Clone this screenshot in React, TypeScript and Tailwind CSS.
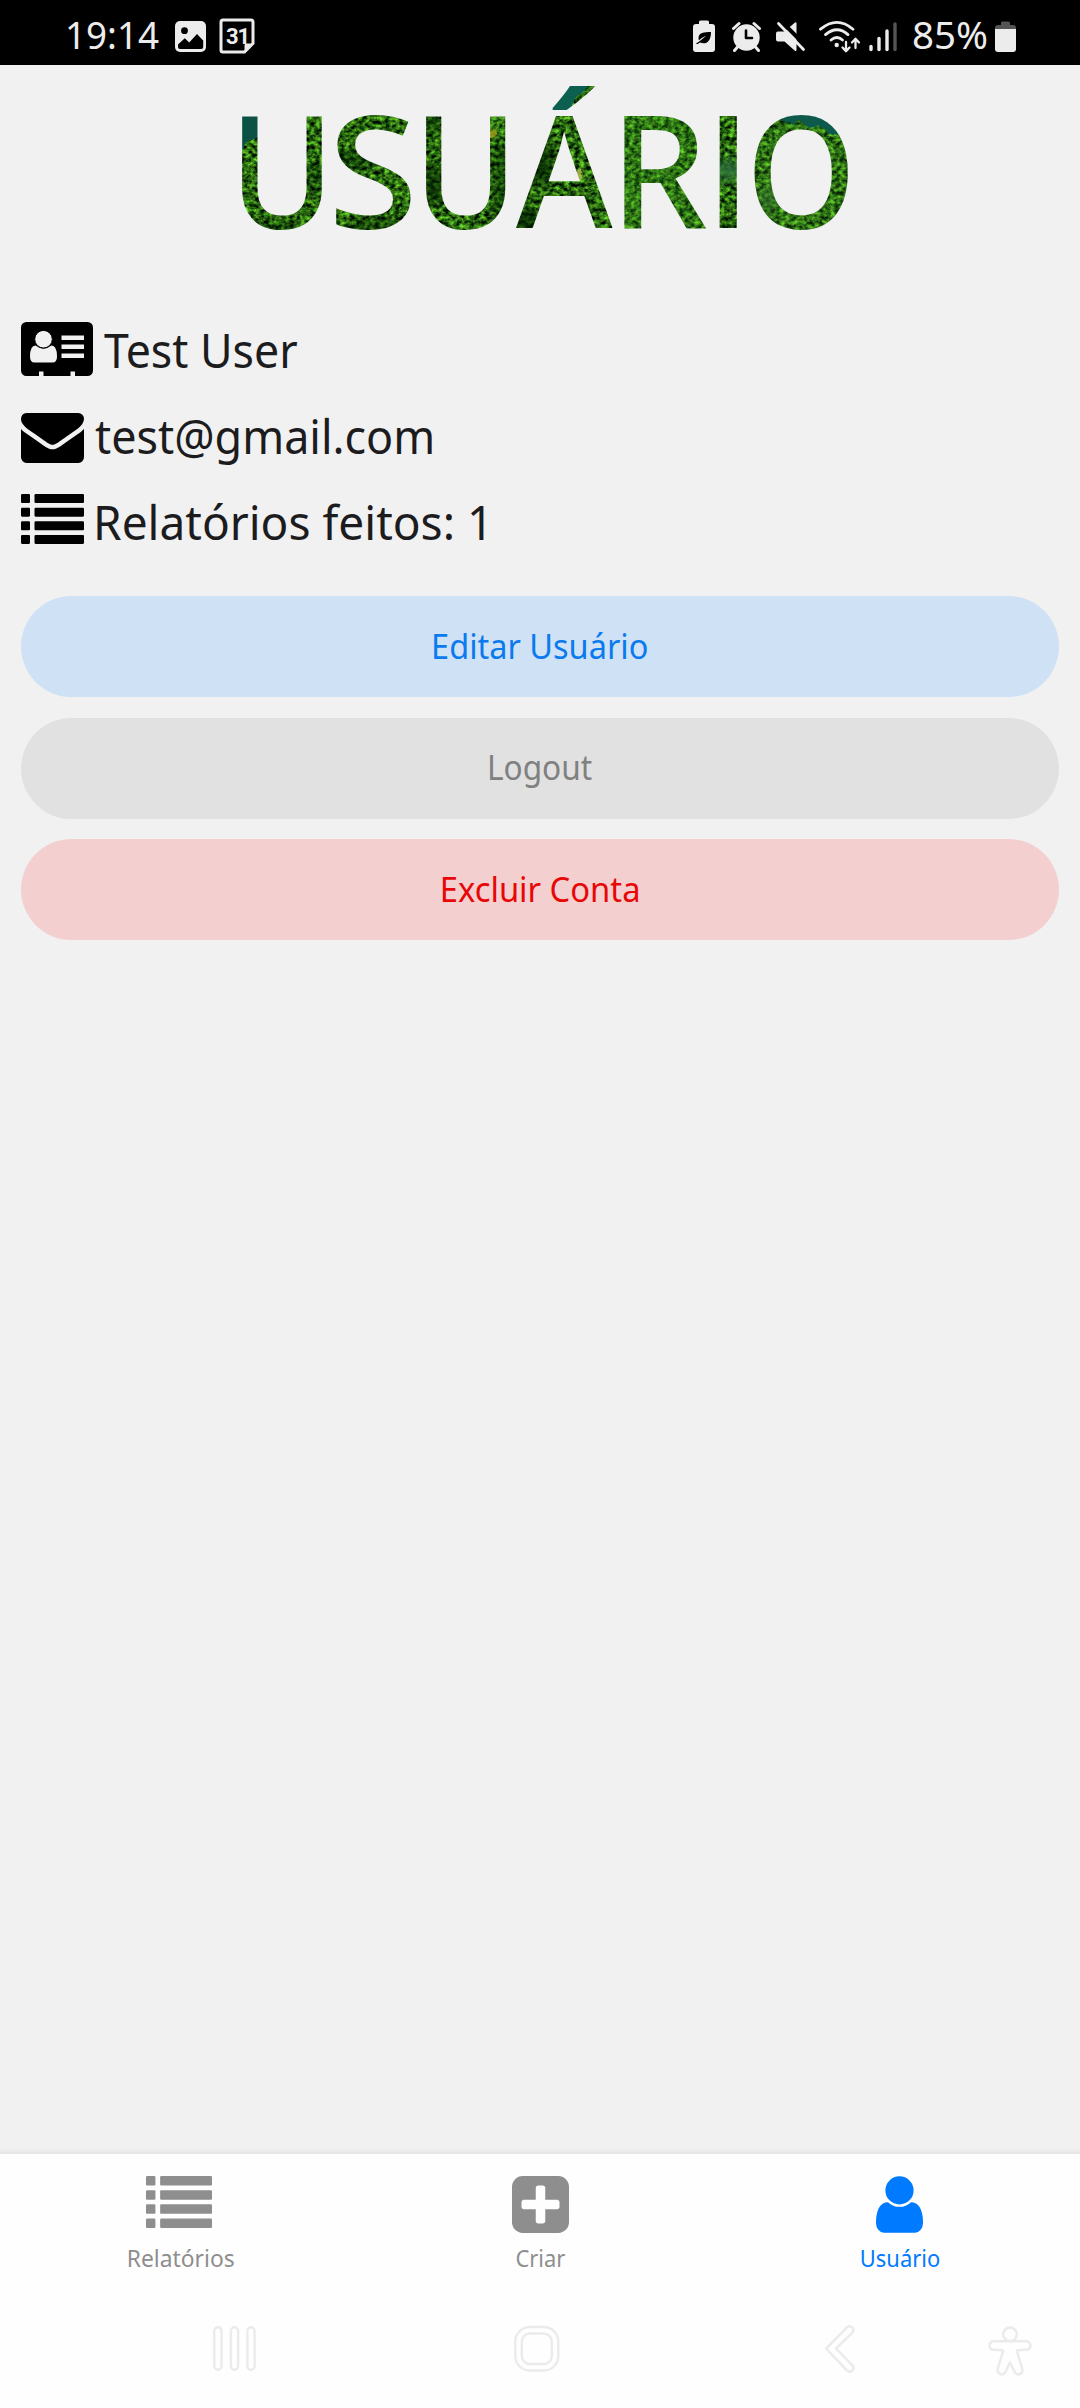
import type { ReactNode } from "react";

function StatusBar() {
  return (
    <header className="flex h-[65px] items-start bg-black pl-[65px] pr-16 text-[#ececec]">
      <span className="mt-[12px] h-11 w-[110px] shrink-0 origin-left scale-x-[0.955] whitespace-nowrap text-[38.5px] leading-[44px]">
        19:14
      </span>
      <svg className="mt-[21px] h-[31px] w-[31px] shrink-0" viewBox="0 0 31 31">
        <rect width="31" height="31" rx="5" fill="currentColor" />
        <circle cx="9.5" cy="9.7" r="3.4" fill="#000" />
        <path d="M3 23.5l6.8-6.2 4.4 4.2 7.8-8.6 6.2 6.6V26a2 2 0 0 1-2 2H5a2 2 0 0 1-2-2z" fill="#000" />
      </svg>
      <svg className="ml-[13px] mt-[18px] h-9 w-9 shrink-0" viewBox="0 0 36 36">
        <path d="M4 2h28a2 2 0 0 1 2 2v21.5L25.500 34H4a2 2 0 0 1-2-2V4a2 2 0 0 1 2-2z" fill="none" stroke="currentColor" strokeWidth="3" />
        <path d="M34 25.500L25.500 34v-6.500q0-2 2-2z" fill="currentColor" />
        <text x="18.500" y="25.500" textAnchor="middle" fontFamily="Roboto, sans-serif" fontWeight="700" fontSize="22" letterSpacing="-1" fill="currentColor">31</text>
      </svg>

      <div className="ml-auto flex items-start">
        <svg className="mt-5 h-8 w-[22px]" viewBox="0 0 22 32">
          <path d="M6 4V2a1.500 1.500 0 0 1 1.500-1.500h7A1.500 1.500 0 0 1 16 2v2h3a3 3 0 0 1 3 3v22a3 3 0 0 1-3 3H3a3 3 0 0 1-3-3V7a3 3 0 0 1 3-3z" fill="currentColor" />
          <path d="M18 12c-7 0-12.500.5-12.500 6 0 1.600.5 2.500.5 2.500S9 17 13 16c-4 3-6.500 6-10 7.500 1 1 2.500.5 4-.9 6 2.200 11-.6 11-10.600z" fill="#000" />
        </svg>
        <svg className="ml-[16px] mt-[21px] h-[31px] w-[31px]" viewBox="0 0 31 31">
          <circle cx="15.500" cy="16.500" r="13.200" fill="currentColor" />
          <path d="M2.500 7.500L8 2.500M28.500 7.500L23 2.500M6.500 26l-3 3.500M24.500 26l3 3.500" stroke="currentColor" strokeWidth="3" strokeLinecap="round" />
          <path d="M15 9.500v7.500h6" fill="none" stroke="#000" strokeWidth="2.600" strokeLinecap="round" strokeLinejoin="round" />
        </svg>
        <svg className="ml-[13px] mt-[21px] h-8 w-8" viewBox="0 0 32 32">
          <path d="M3 10.500h6.500L20 1.500a1 1 0 0 1 1.500.8V29a1 1 0 0 1-1.600.8L9.500 20.500H3a2 2 0 0 1-2-2v-6a2 2 0 0 1 2-2z" fill="currentColor" />
          <path d="M6 0L32 26" stroke="#000" strokeWidth="4" />
          <path d="M3.500 2.500L28.500 28.500" stroke="currentColor" strokeWidth="2.800" strokeLinecap="round" />
        </svg>
        <svg className="ml-[12px] mt-5 h-[33px] w-[42px]" viewBox="0 0 42 33">
          <g fill="none" stroke="currentColor" strokeWidth="2.800" strokeLinecap="round">
            <path d="M1.500 9.200Q18 -4.500 34 9.200" />
            <path d="M6.500 14.600Q18 4.800 29 14.600" />
            <path d="M12 20Q18 15 23.500 20" />
            <path d="M27 22v8.500M23.500 27.500l3.500 3.700 3.500-3.700M36.500 28v-8.500M33 22.500l3.500-3.700 3.500 3.700" strokeWidth="2.300" strokeLinejoin="round" />
          </g>
          <circle cx="17.700" cy="25" r="2.200" fill="currentColor" />
        </svg>
        <svg className="ml-[8px] mt-[21px] h-[31px] w-7" viewBox="0 0 28 31">
          <g strokeWidth="3.400" strokeLinecap="round" stroke="currentColor">
            <path d="M2 25.500v3" />
            <path d="M10 17.500v11" />
            <path d="M18 10v18.500" />
            <path d="M26 3v25.500" stroke="#555" />
          </g>
        </svg>
        <span className="ml-[15px] mr-px mt-[12px] h-11 w-[82px] whitespace-nowrap text-[38.5px] leading-[44px]">85%</span>
        <svg className="mt-[21px] h-[31px] w-[21px]" viewBox="0 0 21 31">
          <path d="M6 4V2a1.500 1.500 0 0 1 1.500-1.500h6A1.500 1.500 0 0 1 15 2v2h3a3 3 0 0 1 3 3v2H0V7a3 3 0 0 1 3-3z" fill="#555" />
          <path d="M0 8h21v20a3 3 0 0 1-3 3H3a3 3 0 0 1-3-3z" fill="currentColor" />
        </svg>
      </div>
    </header>
  );
}

const titleLetters: { ch: string; x: number; y?: number; sx: number; font?: string; weight?: number }[] = [
  { ch: "U", x: 229.5, sx: 0.905 },
  { ch: "S", x: 328, sx: 1.04 },
  { ch: "U", x: 413.5, sx: 0.9 },
  { ch: "A", x: 516, sx: 0.94 },
  { ch: "´", x: 546, y: 206, sx: 1.06, weight: 650 },
  { ch: "R", x: 610, sx: 0.985 },
  { ch: "I", x: 707.3, sx: 1, font: "Inter", weight: 500 },
  { ch: "O", x: 746.3, sx: 0.893 },
];

/* Page title: letters cut out of a forest texture. */
function ForestTitle() {
  return (
    <svg className="block h-[185px] w-full" viewBox="0 65 1080 185" role="img" aria-label="USUÁRIO">
      <defs>
        <clipPath id="crop">
          <rect x="230" y="86" width="630" height="150" />
        </clipPath>
        <clipPath id="letters" clipPath="url(#crop)">
          {titleLetters.map((l, i) => (
            <text
              key={i}
              transform={`translate(${l.x} ${l.y ?? 228}) scale(${l.sx} 1)`}
              fontFamily={l.font ?? "Noto Sans"}
              fontWeight={l.weight ?? 550}
              fontSize={l.font ? 154 : 157}
            >
              {l.ch}
            </text>
          ))}
        </clipPath>
        <filter id="foliage" x="0" y="0" width="100%" height="100%" colorInterpolationFilters="sRGB">
          <feTurbulence type="fractalNoise" baseFrequency="0.2 0.24" numOctaves="3" seed="11" />
          <feColorMatrix values="0.85 0 0 0 -0.26  1.45 0.2 0 0 -0.42  0.3 0 0 0 -0.08  0 0 0 0 1" />
        </filter>
        <filter id="soft" x="-50%" y="-50%" width="200%" height="200%">
          <feGaussianBlur stdDeviation="6" />
        </filter>
        <filter id="edge">
          <feTurbulence type="fractalNoise" baseFrequency="0.12" numOctaves="2" result="n" />
          <feDisplacementMap in="SourceGraphic" in2="n" scale="6" xChannelSelector="R" yChannelSelector="G" />
          <feGaussianBlur stdDeviation="0.6" />
        </filter>
      </defs>
      <g clipPath="url(#letters)">
        <rect x="230" y="80" width="630" height="160" filter="url(#foliage)" />
        <g filter="url(#soft)">
          <ellipse cx="432" cy="185" rx="13" ry="22" fill="#001c02" opacity="0.65" />
          <ellipse cx="430" cy="122" rx="14" ry="12" fill="#002003" opacity="0.5" />
          <ellipse cx="503" cy="185" rx="12" ry="45" fill="#002003" opacity="0.5" />
          <ellipse cx="540" cy="160" rx="14" ry="26" fill="#001802" opacity="0.7" />
          <ellipse cx="525" cy="222" rx="22" ry="14" fill="#001802" opacity="0.7" />
          <ellipse cx="578" cy="205" rx="14" ry="10" fill="#001802" opacity="0.6" />
          <ellipse cx="355" cy="160" rx="22" ry="10" fill="#002003" opacity="0.55" />
          <ellipse cx="375" cy="226" rx="30" ry="8" fill="#001c02" opacity="0.5" />
          <ellipse cx="316" cy="180" rx="8" ry="18" fill="#002003" opacity="0.5" />
          <ellipse cx="280" cy="228" rx="24" ry="6" fill="#002003" opacity="0.45" />
          <ellipse cx="728" cy="228" rx="12" ry="7" fill="#002003" opacity="0.5" />
          <ellipse cx="660" cy="170" rx="60" ry="70" fill="#3f9a1d" opacity="0.25" />
          <ellipse cx="800" cy="180" rx="60" ry="60" fill="#3f9a1d" opacity="0.2" />
          <ellipse cx="728" cy="170" rx="14" ry="10" fill="#2b6b3b" opacity="0.95" />
          <ellipse cx="770" cy="198" rx="12" ry="12" fill="#35702f" opacity="0.7" />
        </g>
        <g filter="url(#edge)">
          <path d="M232 100h28v36q-12 2-18 14h-10z" fill="#0b5145" />
          <path d="M545 80h46q-4 10-14 17l-14 17h-30z" fill="#07604f" />
          <path d="M788 108h34l24 27h-14l-12-9-12 2-8-8-8 4-12-4z" fill="#075a4d" />
          <ellipse cx="492" cy="134" rx="5" ry="4" fill="#a0a21c" opacity="0.8" />
          <ellipse cx="579" cy="174" rx="3.500" ry="7" fill="#b4c050" opacity="0.85" />
          <ellipse cx="342" cy="208" rx="5" ry="3" fill="#6d7d1c" opacity="0.7" />
        </g>
      </g>
    </svg>
  );
}

function IdCardIcon() {
  return (
    <svg className="h-[54px] w-[72px]" viewBox="0 0 72 54">
      <path d="M5.500 0h61A5.500 5.500 0 0 1 72 5.500v43a5.500 5.500 0 0 1-5.500 5.500H54v-4.500h-4.500V54h-27v-4.500H18V54H5.500A5.500 5.500 0 0 1 0 48.500v-43A5.500 5.500 0 0 1 5.500 0z" />
      <g fill="#f1f1f1">
        <path d="M14.600 23.500q8 6.500 15.800 0Q36 23.500 36 34.500 36 40.500 31.500 40.500H13.500Q9 40.500 9 34.500q0-11 5.600-11z" />
        <circle cx="22.500" cy="17.200" r="8.800" stroke="#000" strokeWidth="1" />
        <path d="M40.500 13.500H63V18H40.500zM40.500 22.500H63V27H40.500zM40.500 31.500H63V36H40.500z" />
      </g>
    </svg>
  );
}

function EnvelopeIcon() {
  return (
    <svg className="h-[50px] w-[63px]" viewBox="0 256 1792 1408" preserveAspectRatio="none">
      <path d="M1792 710v794q0 66-47 113t-113 47h-1472q-66 0-113-47t-47-113v-794q44 49 101 87 362 246 497 345 57 42 92.500 65.500t94.500 48 110 24.500h2q51 0 110-24.500t94.500-48 92.500-65.500q170-123 498-345 57-39 100-87zm0-294q0 79-49 151t-122 123q-376 261-468 325-10 7-42.500 31t-54 38.500-52 32.500-57.500 27-50 9h-2q-23 0-50-9t-57.500-27-52-32.500-54-38.500-42.500-31q-91-64-262-182.500t-205-142.500q-62-42-117-115.500t-55-136.500q0-78 41.500-130t118.500-52h1472q65 0 112.500 47t47.500 113z" />
    </svg>
  );
}

function ListIcon({ className }: { className: string }) {
  return (
    <svg className={className} viewBox="0 0 1792 1408" preserveAspectRatio="none" fill="currentColor">
      {[0, 384, 768, 1152].map((y) => (
        <g key={y}>
          <rect y={y} width="256" height="256" rx="32" />
          <rect x="384" y={y} width="1408" height="256" rx="32" />
        </g>
      ))}
    </svg>
  );
}

function InfoRow({ icon, children, className }: { icon: ReactNode; children: ReactNode; className: string }) {
  return (
    <div className="flex h-[86px] items-start pl-[21px] text-[47.6px] leading-[62px] text-[#1c1c1e]">
      {icon}
      <span className={`origin-left whitespace-nowrap ${className}`}>{children}</span>
    </div>
  );
}

function ActionButton({ label, className, textClass }: { label: string; className: string; textClass: string }) {
  return (
    <button className={`flex h-[101px] w-full items-center justify-center rounded-full pb-[2px] text-[34px] leading-[46px] ${className}`}>
      <span className={textClass}>{label}</span>
    </button>
  );
}

function Tab({ icon, label, className, textClass }: { icon: ReactNode; label: string; className: string; textClass: string }) {
  return (
    <button className={`flex flex-1 flex-col items-center pt-[22px] ${className}`}>
      <span className="flex h-[66px] items-start">{icon}</span>
      <span className={`text-[24px] leading-8 ${textClass}`}>{label}</span>
    </button>
  );
}

function SystemNav() {
  return (
    <div className="flex h-[118px] items-start bg-[#fefefe] pl-[212px]">
      <svg className="mt-[35px] h-[47px] w-[45px]" viewBox="0 0 45 47" fill="none" stroke="#ebebeb" strokeWidth="2.400">
        <rect x="2.300" y="2.200" width="7.200" height="42.600" rx="3.600" />
        <rect x="18.900" y="2.200" width="7.200" height="42.600" rx="3.600" />
        <rect x="35.400" y="2.200" width="7.200" height="42.600" rx="3.600" />
      </svg>
      <svg className="ml-[256px] mt-[35px] h-[47px] w-[47px]" viewBox="0 0 47 47" fill="none" stroke="#ebebeb" strokeWidth="2.400">
        <rect x="2.300" y="2" width="43" height="43.500" rx="14.500" />
        <rect x="8.800" y="8.500" width="30" height="30.500" rx="8" />
      </svg>
      <svg className="ml-[264px] mt-[34px] h-[50px] w-8" viewBox="0 0 32 50" fill="none" stroke="#ebebeb" strokeWidth="2.500" strokeLinejoin="round">
        <path d="M2.200 24.500L23 3.300q3-2.200 5.500.3 2.100 2.600-.3 5.200L12 24.500 28.200 41.200q2.400 2.700.3 5.200-2.500 2.400-5.500.2z" />
      </svg>
      <svg className="ml-[132px] mt-[36px] h-[52px] w-11" viewBox="0 0 44 52" fill="none" stroke="#ebebeb" strokeWidth="2.500" strokeLinejoin="round">
        <circle cx="22" cy="8.300" r="6.800" />
        <path d="M6 15.300H38q4.300.3 4.500 4.300-.2 3.900-4.500 4.200l-8.500.5q-.8 0-.5 1.200L34.300 43q.8 4.200-3 5.300-3.200.6-4.900-2.800L22 36.500l-4.400 9q-1.700 3.400-4.900 2.800-3.800-1.100-3-5.300L15 25.500q.3-1.200-.5-1.200L6 23.800q-4.300-.3-4.500-4.200.2-4 4.500-4.300z" />
      </svg>
    </div>
  );
}

export default function App() {
  return (
    <div className="flex h-[2408px] w-[1080px] flex-col overflow-hidden bg-[#f1f1f1] font-['Noto_Sans',sans-serif]">
      <StatusBar />
      <main className="flex flex-1 flex-col">
        <ForestTitle />
        <section className="mt-[69px] h-[277px]">
          <InfoRow icon={<span className="mt-[3px] w-[83px]"><IdCardIcon /></span>} className="scale-x-[0.938]">Test User</InfoRow>
          <InfoRow icon={<span className="mt-[8px] w-[74px]"><EnvelopeIcon /></span>} className="scale-x-[0.943]">test@gmail.com</InfoRow>
          <InfoRow icon={<span className="mt-[3px] w-[72px] text-black"><ListIcon className="h-[50px] w-[63px]" /></span>} className="scale-x-[0.967]">Relatórios feitos: 1</InfoRow>
        </section>
        <section className="flex flex-col gap-[20.5px] px-[21px]">
          <ActionButton label="Editar Usuário" className="bg-[#cfe1f5] text-[#0a7aef]" textClass="scale-x-[0.955]" />
          <ActionButton label="Logout" className="bg-[#e1e1e1] text-[#808080]" textClass="scale-x-[0.93]" />
          <ActionButton label="Excluir Conta" className="bg-[#f3cfcf] text-[#e80707]" textClass="scale-x-[0.963]" />
        </section>
      </main>
      <div className="h-1.5 bg-gradient-to-b from-[#f1f1f1] to-[#e4e4e4]" />
      <nav className="flex h-[136px] bg-[#fefefe]">
        <Tab icon={<ListIcon className="mr-0.5 h-[52px] w-[66px]" />} label="Relatórios" className="text-[#8e8e8f]" textClass="ml-0.5 scale-x-[0.951]" />
        <Tab
          icon={
            <svg className="h-[57px] w-[57px]" viewBox="128 128 1536 1536" fill="currentColor">
              <path d="M1408 960v-128q0-26-19-45t-45-19h-320v-320q0-26-19-45t-45-19h-128q-26 0-45 19t-19 45v320h-320q-26 0-45 19t-19 45v128q0 26 19 45t45 19h320v320q0 26 19 45t45 19h128q26 0 45-19t19-45v-320h320q26 0 45-19t19-45zm256-544v960q0 119-84.500 203.500t-203.500 84.500h-960q-119 0-203.500-84.500t-84.500-203.500v-960q0-119 84.500-203.500t203.500-84.500h960q119 0 203.500 84.500t84.500 203.500z" />
            </svg>
          }
          label="Criar"
          className="text-[#8e8e8f]"
          textClass="scale-x-[0.912]"
        />
        <Tab
          icon={
            <svg className="mr-px h-[57px] w-[47px]" viewBox="256 128 1280 1536" fill="currentColor">
              <path d="M1536 1399q0 109-62.500 187t-150.500 78h-854q-88 0-150.500-78t-62.500-187q0-85 8.500-160.500t31.500-152 58.500-131 94-89 134.500-34.500q131 128 313 128t313-128q76 0 134.500 34.500t94 89 58.500 131 31.500 152 8.500 160.500zm-256-887q0 159-112.500 271.500t-271.500 112.500-271.500-112.500-112.500-271.500 112.500-271.500 271.500-112.500 271.500 112.500 112.500 271.500z" />
            </svg>
          }
          label="Usuário"
          className="text-[#007aff]"
          textClass="scale-x-[0.913]"
        />
      </nav>
      <SystemNav />
    </div>
  );
}
